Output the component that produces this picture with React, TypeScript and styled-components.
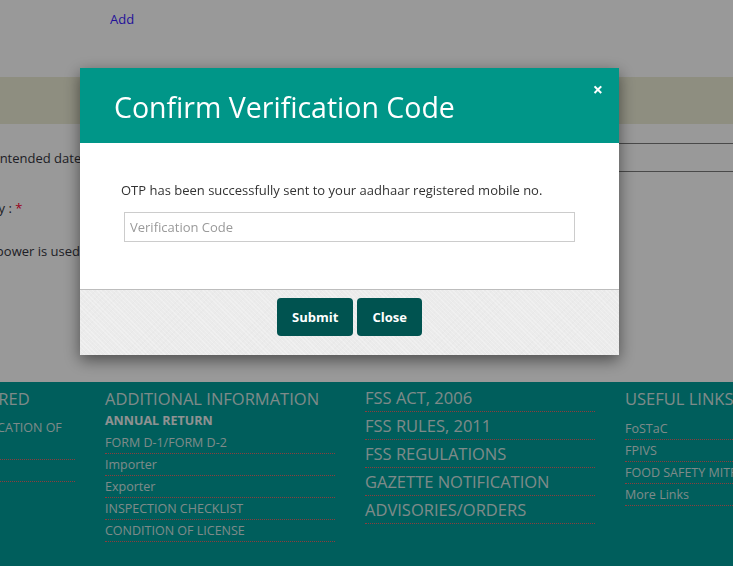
import styled, { createGlobalStyle } from "styled-components";

const GlobalStyle = createGlobalStyle`
  html, body {
    margin: 0;
    padding: 0;
    width: 733px;
    height: 566px;
    overflow: hidden;
    background: #ffffff;
    font-family: "Open Sans", "Noto Sans", sans-serif;
  }
`;

const formRows = [
  { label: "Intended date of start of business", shift: 4, space: 19, lined: true },
  { label: "Category : ", shift: 49, space: 21, required: true },
  { label: "Whether power is used in premises", shift: 60, space: 14 },
];

const footerColumns = [
  {
    heading: "LICENSED / REGISTERED",
    offset: 7,
    items: [
      { text: "APPLICATION FOR MODIFICATION OF", more: "LICENSE" },
      { text: "FAQ" },
    ],
  },
  {
    heading: "ADDITIONAL INFORMATION",
    sub: "ANNUAL RETURN",
    offset: 1,
    items: [
      { text: "FORM D-1/FORM D-2" },
      { text: "Importer" },
      { text: "Exporter" },
      { text: "INSPECTION CHECKLIST" },
      { text: "CONDITION OF LICENSE" },
    ],
  },
  {
    big: true,
    offset: 2,
    items: [
      { text: "FSS ACT, 2006" },
      { text: "FSS RULES, 2011" },
      { text: "FSS REGULATIONS" },
      { text: "GAZETTE NOTIFICATION" },
      { text: "ADVISORIES/ORDERS" },
    ],
  },
  {
    heading: "USEFUL LINKS",
    offset: 8,
    items: [
      { text: "FoSTaC" },
      { text: "FPIVS" },
      { text: "FOOD SAFETY MITRA" },
      { text: "More Links" },
    ],
  },
];

export default function App() {
  return (
    <>
      <GlobalStyle />
      <Page>
        <TopBar>
          <AddLink href="#">Add</AddLink>
        </TopBar>
        <Band />
        <FormArea>
          {formRows.map((row) => (
            <FormRow key={row.label} space={row.space}>
              <Label shift={row.shift}>
                {row.label}
                {row.required && <Star>*</Star>}
              </Label>
              <Field lined={!!row.lined} />
            </FormRow>
          ))}
        </FormArea>
        <Footer>
          {footerColumns.map((col, i) => (
            <Column key={i}>
              {col.heading && <ColHeading>{col.heading}</ColHeading>}
              {col.sub && <SubHeading>{col.sub}</SubHeading>}
              <LinkList offset={col.offset || 0}>
                {col.items.map((item) => (
                  <LinkItem key={item.text} big={!!col.big}>
                    {item.text}
                    {"more" in item && (
                      <>
                        <br />
                        {item.more}
                      </>
                    )}
                  </LinkItem>
                ))}
              </LinkList>
            </Column>
          ))}
        </Footer>
      </Page>

      <Backdrop />
      <Modal>
        <ModalHeader>
          <ModalTitle>Confirm Verification Code</ModalTitle>
          <CloseX>×</CloseX>
        </ModalHeader>
        <ModalBody>
          <Message>
            OTP has been successfully sent to your aadhaar registered mobile no.
          </Message>
          <CodeInput placeholder="Verification Code" />
        </ModalBody>
        <ModalFooter>
          <ActionButton>Submit</ActionButton>
          <ActionButton>Close</ActionButton>
        </ModalFooter>
      </Modal>
    </>
  );
}

const Page = styled.div`
  width: 733px;
  height: 566px;
  display: flex;
  flex-direction: column;
  overflow: hidden;
`;

const TopBar = styled.div`
  height: 77px;
  box-sizing: border-box;
  padding: 7px 0 0 110px;
`;

const AddLink = styled.a`
  font-size: 13px;
  color: #3a1cff;
  text-decoration: none;
`;

const Band = styled.div`
  height: 47px;
  background: #ededd6;
`;

const FormArea = styled.div`
  height: 258px;
  display: flex;
  flex-direction: column;
`;

const FormRow = styled.div<{ space: number }>`
  display: flex;
  align-items: center;
  height: 29px;
  margin-top: ${({ space }) => space}px;
`;

const Label = styled.div<{ shift: number }>`
  width: 400px;
  margin-left: ${({ shift }) => -shift}px;
  font-size: 13px;
  color: #353540;
  white-space: nowrap;
`;

const Star = styled.span`
  color: #ff0030;
`;

const Field = styled.div<{ lined: boolean }>`
  flex: 1;
  align-self: stretch;
  border-top: ${({ lined }) => (lined ? "1px solid #7a7a7a" : "none")};
  border-bottom: ${({ lined }) => (lined ? "1px solid #7a7a7a" : "none")};
`;

const Footer = styled.div`
  flex: 1;
  background: #009d99;
  display: grid;
  grid-template-columns: repeat(4, 230px);
  column-gap: 30px;
  margin-left: -155px;
  align-content: start;
`;

const Column = styled.div`
  display: flex;
  flex-direction: column;
  color: #d3e6e4;
`;

const ColHeading = styled.div`
  margin-top: 6px;
  font-size: 16.5px;
  line-height: 22px;
  white-space: nowrap;
`;

const SubHeading = styled.div`
  font-size: 12.5px;
  font-weight: 700;
  line-height: 21px;
  color: #eef3f3;
`;

const LinkList = styled.div<{ offset: number }>`
  margin-top: ${({ offset }) => offset}px;
  display: flex;
  flex-direction: column;
`;

const LinkItem = styled.div<{ big: boolean }>`
  font-size: ${({ big }) => (big ? "16.5px" : "12.5px")};
  line-height: ${({ big }) => (big ? "27px" : "21px")};
  border-bottom: 1px dotted #ec6464;
  white-space: nowrap;
`;

const Backdrop = styled.div`
  position: fixed;
  inset: 0;
  background: rgba(0, 0, 0, 0.4);
  z-index: 10;
`;

const Modal = styled.div`
  position: fixed;
  top: 68px;
  left: 80px;
  width: 539px;
  z-index: 20;
  background: #ffffff;
  box-shadow: 0 5px 15px rgba(0, 0, 0, 0.5);
  display: flex;
  flex-direction: column;
`;

const ModalHeader = styled.div`
  height: 75px;
  background: #009688;
  display: flex;
  align-items: center;
  justify-content: space-between;
  padding: 0 16px 0 34px;
`;

const ModalTitle = styled.h4`
  margin: 2px 0 0;
  font-size: 28.5px;
  font-weight: 400;
  color: #ffffff;
`;

const CloseX = styled.button`
  align-self: flex-start;
  margin-top: 12px;
  border: 0;
  background: none;
  padding: 0;
  font-family: "Open Sans", sans-serif;
  font-size: 18px;
  font-weight: 700;
  line-height: 1;
  color: #ffffff;
  cursor: pointer;
`;

const ModalBody = styled.div`
  height: 146px;
  box-sizing: border-box;
  padding: 38px 44px 0 41px;
  display: flex;
  flex-direction: column;
`;

const Message = styled.p`
  margin: 0;
  font-size: 13px;
  color: #333333;
  line-height: 18px;
`;

const CodeInput = styled.input`
  margin: 13px 0 0 3px;
  height: 30px;
  box-sizing: border-box;
  width: 451px;
  border: 1px solid #cccccc;
  padding: 0 5px;
  font-family: "Open Sans", sans-serif;
  font-size: 13px;
  color: #333;
  outline: none;
  &::placeholder {
    color: #9a9a9a;
  }
`;

const ModalFooter = styled.div`
  height: 66px;
  box-sizing: border-box;
  border-top: 1px solid #bdbdbd;
  background-color: #ebebeb;
  background-image: repeating-linear-gradient(
      45deg,
      rgba(255, 255, 255, 0.25) 0 1px,
      transparent 1px 3px
    ),
    repeating-linear-gradient(
      -45deg,
      rgba(0, 0, 0, 0.012) 0 1px,
      transparent 1px 5px
    );
  display: flex;
  justify-content: center;
  align-items: flex-start;
  gap: 4px;
  padding-top: 8px;
`;

const ActionButton = styled.button`
  height: 38px;
  padding: 0 15px;
  border: 0;
  border-radius: 4px;
  background: #005350;
  color: #ffffff;
  font-family: "Open Sans", sans-serif;
  font-size: 13px;
  font-weight: 700;
  cursor: pointer;
`;
